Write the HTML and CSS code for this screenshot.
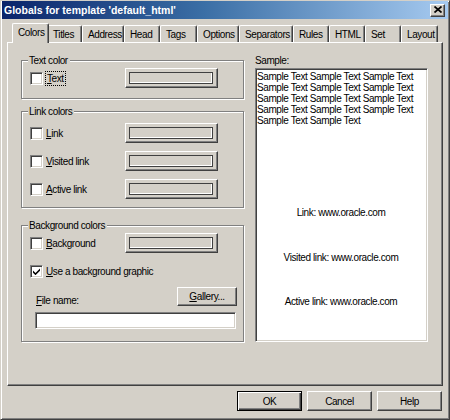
FILE: index.html
```html
<!DOCTYPE html>
<html>
<head>
<meta charset="utf-8">
<title>Globals for template</title>
<link rel="stylesheet" href="styles.css">
</head>
<body>
<div class="window">
  <div class="titlebar">
    <span class="title">Globals for template 'default_html'</span>
    <span class="close"><svg width="8" height="7" viewBox="0 0 8 7"><path d="M0.5 0.5l7 6M7.5 0.5l-7 6" stroke="#000" stroke-width="1.7"/></svg></span>
  </div>
  <div class="tabs">
    <div class="tab active t-colors">Colors</div>
    <div class="tab t-titles">Titles</div>
    <div class="tab t-address">Address</div>
    <div class="tab t-head">Head</div>
    <div class="tab t-tags">Tags</div>
    <div class="tab t-options">Options</div>
    <div class="tab t-separators">Separators</div>
    <div class="tab t-rules">Rules</div>
    <div class="tab t-html">HTML</div>
    <div class="tab t-set">Set</div>
    <div class="tab t-layout">Layout</div>
  </div>
  <div class="panel">
    <div class="left">
      <div class="group g-text">
        <span class="group-title">Text color</span>
        <div class="row">
          <div class="check-label"><span class="checkbox"></span><span class="label focus"><u>T</u>ext</span></div>
          <div class="color-btn"><span class="swatch"></span></div>
        </div>
      </div>
      <div class="group g-link">
        <span class="group-title">Link colors</span>
        <div class="row">
          <div class="check-label"><span class="checkbox"></span><span class="label"><u>L</u>ink</span></div>
          <div class="color-btn"><span class="swatch"></span></div>
        </div>
        <div class="row">
          <div class="check-label"><span class="checkbox"></span><span class="label"><u>V</u>isited link</span></div>
          <div class="color-btn"><span class="swatch"></span></div>
        </div>
        <div class="row">
          <div class="check-label"><span class="checkbox"></span><span class="label"><u>A</u>ctive link</span></div>
          <div class="color-btn"><span class="swatch"></span></div>
        </div>
      </div>
      <div class="group g-bg">
        <span class="group-title">Background colors</span>
        <div class="row">
          <div class="check-label"><span class="checkbox"></span><span class="label"><u>B</u>ackground</span></div>
          <div class="color-btn"><span class="swatch"></span></div>
        </div>
        <div class="row row-check">
          <div class="check-label wide"><span class="checkbox"><svg width="7" height="7" viewBox="0 0 7 7"><path d="M0 2.5L2.5 5L7 0.5V2.8L2.5 7.2L0 4.7Z" fill="#000"/></svg></span><span class="label"><u>U</u>se a background graphic</span></div>
        </div>
        <div class="row-file">
          <span class="label"><u>F</u>ile name:</span>
          <div class="btn gallery"><u>G</u>allery...</div>
        </div>
        <div class="input"></div>
      </div>
    </div>
    <div class="right">
      <div class="sample-label">Sample:</div>
      <div class="sample">
        <p class="sample-text">Sample Text Sample Text Sample Text Sample Text Sample Text Sample Text Sample Text Sample Text Sample Text Sample Text Sample Text Sample Text Sample Text Sample Text</p>
        <p class="link-line l1">Link: www.oracle.com</p>
        <p class="link-line l2">Visited link: www.oracle.com</p>
        <p class="link-line l3">Active link: www.oracle.com</p>
      </div>
    </div>
  </div>
  <div class="buttons">
    <div class="btn default">OK</div>
    <div class="btn">Cancel</div>
    <div class="btn">Help</div>
  </div>
</div>
</body>
</html>
```
FILE: styles.css
```css
* { box-sizing: border-box; }
html, body { margin: 0; padding: 0; }
body {
  background: #d4d0c8;
  font: 10px/11px "Liberation Sans", Arial, sans-serif;
  letter-spacing: -0.4px;
  color: #000;
}
u { text-decoration: underline; text-underline-offset: 1px; }

.window {
  width: 450px;
  height: 420px;
  border: 1px solid;
  border-color: #d4d0c8 #404040 #404040 #d4d0c8;
  box-shadow: inset 1px 1px 0 #fff, inset -1px -1px 0 #808080;
  padding: 0 1px;
  background: #d4d0c8;
  display: flex;
  flex-direction: column;
}

.titlebar {
  height: 18px;
  background: linear-gradient(to right, #0a246a 0%, #3a6ea5 45%, #a6caf0 100%);
  display: flex;
  align-items: center;
  justify-content: space-between;
  padding: 0 3px 0 2px;
}
.title {
  color: #fff;
  font-weight: bold;
  font-size: 10.5px;
  letter-spacing: 0;
}
.close {
  width: 15px;
  height: 13px;
  background: #d4d0c8;
  border: 1px solid;
  border-color: #fff #404040 #404040 #fff;
  box-shadow: inset -1px -1px 0 #808080;
  display: flex;
  align-items: center;
  justify-content: center;
  padding-bottom: 1px;
}
.close svg { display: block; }

.tabs {
  margin-top: 4px;
  height: 20px;
  display: flex;
  align-items: flex-end;
  padding-left: 12px;
  position: relative;
  z-index: 1;
}
.tab {
  height: 17px;
  margin-bottom: 1px;
  padding: 3px 0 0 5px;
  border-top: 1px solid #fff;
  border-left: 1px solid #fff;
  border-right: 1px solid #404040;
  border-radius: 2px 2px 0 0;
  box-shadow: inset -1px 0 0 #808080;
  background: #d4d0c8;
  white-space: nowrap;
  overflow: hidden;
}
.tab.active {
  height: 20px;
  margin: 0 -2px 0 -2px;
  padding: 3px 0 0 5px;
  position: relative;
  z-index: 2;
}
.t-colors { width: 37px; }
.t-titles { width: 35px; }
.t-address { width: 42px; }
.t-head { width: 36px; }
.t-tags { width: 37px; }
.t-options { width: 42px; }
.t-separators { width: 54px; }
.t-rules { width: 36px; }
.t-html { width: 36px; }
.t-set { width: 36px; }
.t-layout { width: 37px; }

.panel {
  margin: -1px 5px 0 5px;
  height: 344px;
  border: 1px solid;
  border-color: #fff #404040 #404040 #fff;
  box-shadow: inset -1px -1px 0 #808080;
  display: flex;
  gap: 10px;
  padding-left: 13px;
}

.left { width: 224px; }

.group {
  position: relative;
  width: 223px;
  border: 1px solid #808080;
  box-shadow: inset 1px 1px 0 #fff, 1px 1px 0 #fff;
}
.group-title {
  position: absolute;
  top: -6px;
  left: 6px;
  padding: 0 2px 0 1px;
  background: #d4d0c8;
  line-height: 11px;
}
.g-text { margin-top: 17px; padding: 7px 0 10px; }
.g-link { margin-top: 12px; padding: 11px 0 8px; display: flex; flex-direction: column; gap: 8px; }
.g-bg { margin-top: 17px; padding: 7px 0 12px; }

.row {
  height: 20px;
  display: flex;
  align-items: center;
  padding-left: 8px;
}
.row-check { margin-top: 8px; }
.check-label {
  width: 95px;
  display: flex;
  align-items: center;
}
.check-label.wide { width: auto; }
.checkbox {
  width: 13px;
  height: 13px;
  flex: none;
  background: #fff;
  border: 1px solid;
  border-color: #808080 #fff #fff #808080;
  box-shadow: inset 1px 1px 0 #404040, inset -1px -1px 0 #d4d0c8;
  display: flex;
  align-items: center;
  justify-content: center;
}
.checkbox svg { display: block; }
.label { margin-left: 3px; white-space: nowrap; }
.focus {
  margin-left: 2px;
  padding: 1px 1px 1px 1px;
  border: 1px dotted #000;
}

.color-btn {
  width: 93px;
  height: 20px;
  border: 1px solid;
  border-color: #fff #404040 #404040 #fff;
  box-shadow: inset -1px -1px 0 #808080, inset 1px 1px 0 #d4d0c8;
  padding: 3px 4px 3px 3px;
  display: flex;
}
.swatch {
  flex: 1;
  border: 1px solid;
  border-color: #404040 #404040 #404040 #404040;
  box-shadow: inset -1px -1px 0 #fff;
  background: #d4d0c8;
}

.row-file {
  margin-top: 6px;
  height: 19px;
  display: flex;
  align-items: flex-end;
  justify-content: space-between;
  padding: 0 6px 0 13px;
}
.row-file .label { margin: 0 0 0 1px; line-height: 11px; }

.btn {
  width: 65px;
  height: 20px;
  border: 1px solid;
  border-color: #fff #404040 #404040 #fff;
  box-shadow: inset -1px -1px 0 #808080, inset 1px 1px 0 #d4d0c8;
  display: flex;
  align-items: center;
  justify-content: center;
  background: #d4d0c8;
}
.btn.gallery { width: 60px; height: 19px; }
.btn.default {
  border: 1px solid #000;
  box-shadow: inset 1px 1px 0 #fff, inset -1px -1px 0 #404040, inset -2px -2px 0 #808080;
}

.input {
  margin: 6px 7px 0 13px;
  height: 17px;
  background: #fff;
  border: 1px solid;
  border-color: #808080 #fff #fff #808080;
  box-shadow: inset 1px 1px 0 #404040, inset -1px -1px 0 #d4d0c8;
}

.right { width: 173px; }
.sample-label { margin-top: 12px; }
.sample {
  margin-top: 2px;
  height: 274px;
  background: #fff;
  border: 1px solid;
  border-color: #808080 #fff #fff #808080;
  box-shadow: inset 1px 1px 0 #404040, inset -1px -1px 0 #d4d0c8;
  padding: 2px 2px 0 1px;
}
.sample p { margin: 0; }
.link-line { text-align: center; }
.l1 { margin-top: 81px !important; }
.l2 { margin-top: 34px !important; }
.l3 { margin-top: 33px !important; }

.buttons {
  margin-top: 5px;
  height: 20px;
  display: flex;
  justify-content: flex-end;
  gap: 5px;
  padding-right: 6px;
}
```
